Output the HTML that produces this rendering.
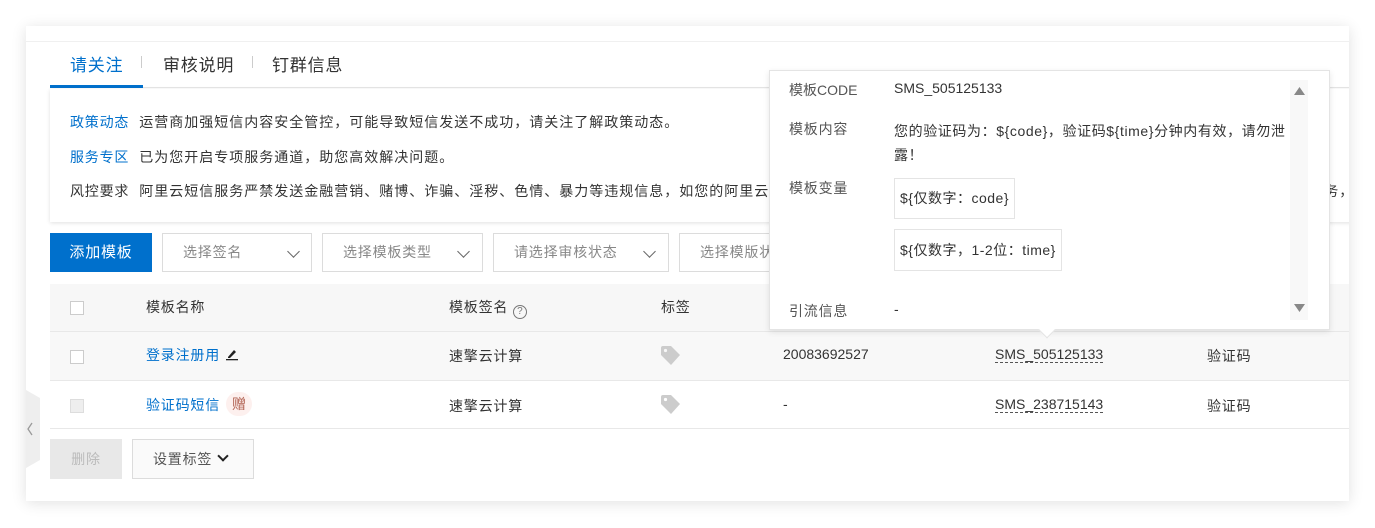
<!DOCTYPE html>
<html><head><meta charset="utf-8">
<style>
*{box-sizing:border-box;margin:0;padding:0}
body{width:1375px;height:528px;background:#fff;font-family:"Liberation Sans","Noto Sans CJK SC",sans-serif;font-size:14px;color:#333;position:relative;overflow:hidden}
.a{position:absolute;white-space:nowrap}
.card{position:absolute;left:26px;top:26px;width:1323px;height:475px;background:#fff;box-shadow:0 2px 14px rgba(0,0,0,.12);overflow:hidden}
.blue{color:#0070cc}
.ls{letter-spacing:0.8px}
.lab{margin-right:10px;letter-spacing:0.8px}
.sel{position:absolute;top:233px;height:39px;border:1px solid #dcdcdc;background:#fff;color:#888;padding-left:20px;line-height:37px;font-size:14px;letter-spacing:0.8px}
.chev{position:absolute;top:13px;width:9px;height:9px;border-right:1.6px solid #666;border-bottom:1.6px solid #666;transform:rotate(45deg)}
.cb{position:absolute;width:14px;height:14px;border:1px solid #ccc;background:#fff}
.dash{border-bottom:1.5px dashed #555}
.tag{position:absolute;width:19px;height:19px}
</style></head><body>
<div class="card">
  <div class="a" style="left:0;top:15px;width:1323px;height:1px;background:#f0f0f0"></div>
  <div class="a" style="left:24px;top:61px;width:1299px;height:1px;background:#e6e6e6"></div>
  <div class="a" style="left:24px;top:59px;width:93px;height:3px;background:#0070cc"></div>
  <div class="a blue ls" style="left:44px;top:25px;font-size:17px">请关注</div>
  <div class="a" style="left:115px;top:30px;width:1px;height:12px;background:#ccc"></div>
  <div class="a ls" style="left:137px;top:25px;font-size:17px">审核说明</div>
  <div class="a" style="left:226px;top:30px;width:1px;height:12px;background:#ccc"></div>
  <div class="a ls" style="left:246px;top:25px;font-size:17px">钉群信息</div>
  <div class="a" style="left:24px;top:63px;width:1320px;height:133px;background:#fff;box-shadow:0 1px 4px rgba(0,0,0,.12)"></div>
  <div class="a" style="left:44px;top:86px;letter-spacing:1px"><span class="blue lab">政策动态</span>运营商加强短信内容安全管控，可能导致短信发送不成功，请关注了解政策动态。</div>
  <div class="a" style="left:44px;top:121px;letter-spacing:1px"><span class="blue lab">服务专区</span>已为您开启专项服务通道，助您高效解决问题。</div>
  <div class="a" style="left:44px;top:155px;letter-spacing:1px"><span class="lab">风控要求</span>阿里云短信服务严禁发送金融营销、赌博、诈骗、淫秽、色情、暴力等违规信息，如您的阿里云账号存在违规行为，将对您的账号进行停用处理，请您遵守相关法律法规使用短信服务，谢谢您的配合！短信签名和模板将严格审核账号</div>
  <div class="a ls" style="left:24px;top:207px;width:102px;height:39px;background:#0070cc;color:#fff;line-height:39px;text-align:center;font-size:15px">添加模板</div>
</div>
<div class="sel" style="left:162px;width:150px">选择签名<span class="chev" style="left:126px"></span></div>
<div class="sel" style="left:322px;width:161px">选择模板类型<span class="chev" style="left:136px"></span></div>
<div class="sel" style="left:493px;width:176px">请选择审核状态<span class="chev" style="left:151px"></span></div>
<div class="sel" style="left:679px;width:100px">选择模版状</div>
<div class="a" style="left:50px;top:284px;width:1299px;height:48px;background:#f7f7f7;border-bottom:1px solid #e8e8e8"></div>
<div class="a" style="left:50px;top:332px;width:1299px;height:49px;background:#f8f8f8;border-bottom:1px solid #e8e8e8"></div>
<div class="a" style="left:50px;top:381px;width:1299px;height:48px;background:#fff;border-bottom:1px solid #e8e8e8"></div>
<div class="cb" style="left:70px;top:301px"></div>
<div class="a ls" style="left:146px;top:297px">模板名称</div>
<div class="a ls" style="left:449px;top:297px">模板签名 <span style="display:inline-block;width:14px;height:14px;border:1.3px solid #777;border-radius:50%;font-size:10px;line-height:12px;text-align:center;color:#777;vertical-align:-2px;letter-spacing:0">?</span></div>
<div class="a ls" style="left:661px;top:297px">标签</div>
<div class="cb" style="left:70px;top:350px"></div>
<div class="a blue ls" style="left:146px;top:345px">登录注册用 <svg width="14" height="14" viewBox="0 0 14 14" style="vertical-align:-1px"><path d="M3 10 L9 3 L11 5 L5 11 L3 11Z" fill="#222"/><rect x="1" y="12" width="12" height="1.3" fill="#222"/></svg></div>
<div class="a ls" style="left:449px;top:346px">速擎云计算</div>
<svg class="tag" style="left:661px;top:346px" viewBox="0 0 19 19"><path d="M2 0 H10 L19 9 L10 19 L0 9 V2 Q0 0 2 0Z" fill="#ccc"/><circle cx="4.5" cy="4.5" r="1.6" fill="#f8f8f8"/></svg>
<div class="a" style="left:783px;top:346px">20083692527</div>
<div class="a" style="left:995px;top:346px"><span class="dash">SMS_505125133</span></div>
<div class="a ls" style="left:1207px;top:346px">验证码</div>
<div class="cb" style="left:70px;top:399px;background:#eee;border-color:#ddd"></div>
<div class="a blue ls" style="left:146px;top:395px">验证码短信</div>
<div class="a" style="left:226px;top:392px;width:26px;height:24px;border-radius:12px;background:#fdf0ee;color:#b06050;text-align:center;line-height:24px">赠</div>
<div class="a ls" style="left:449px;top:396px">速擎云计算</div>
<svg class="tag" style="left:661px;top:395px" viewBox="0 0 19 19"><path d="M2 0 H10 L19 9 L10 19 L0 9 V2 Q0 0 2 0Z" fill="#ccc"/><circle cx="4.5" cy="4.5" r="1.6" fill="#fff"/></svg>
<div class="a" style="left:783px;top:396px">-</div>
<div class="a" style="left:995px;top:396px"><span class="dash">SMS_238715143</span></div>
<div class="a ls" style="left:1207px;top:396px">验证码</div>
<div class="a ls" style="left:50px;top:439px;width:72px;height:40px;background:#e8e8e8;color:#bbb;line-height:40px;text-align:center">删除</div>
<div class="a ls" style="left:132px;top:439px;width:122px;height:40px;border:1px solid #dcdcdc;background:#fafafa;color:#555;line-height:38px;padding-left:20px">设置标签 <span style="display:inline-block;width:8px;height:8px;border-right:2px solid #222;border-bottom:2px solid #222;transform:rotate(45deg);vertical-align:4px;margin-left:2px"></span></div>
<svg class="a" style="left:26px;top:390px" width="14" height="78" viewBox="0 0 14 78"><path d="M0 0 L14 8 V70 L0 78Z" fill="#eee"/><path d="M6 33 L2 39 L6 45" stroke="#999" stroke-width="1.3" fill="none"/></svg>
<div class="a" style="left:769px;top:70px;width:561px;height:260px;background:#fff;border:1px solid #e4e4e4;box-shadow:0 2px 6px rgba(0,0,0,.1)"></div>
<div class="a" style="left:1041px;top:324px;width:12px;height:12px;background:#fff;transform:rotate(45deg);border-right:1px solid #e4e4e4;border-bottom:1px solid #e4e4e4"></div>
<div class="a" style="left:1290px;top:80px;width:18px;height:240px;background:#f8f8f8"></div>
<svg class="a" style="left:1294px;top:87px" width="11" height="8"><path d="M0 8 L5.5 0 L11 8Z" fill="#888"/></svg>
<svg class="a" style="left:1294px;top:304px" width="11" height="8"><path d="M0 0 L5.5 8 L11 0Z" fill="#888"/></svg>
<div class="a" style="left:789px;top:80px;color:#555">模板CODE</div>
<div class="a" style="left:894px;top:80px">SMS_505125133</div>
<div class="a ls" style="left:789px;top:119px;color:#555">模板内容</div>
<div class="a" style="left:894px;top:119px;line-height:24px;white-space:normal;width:405px;letter-spacing:0.6px">您的验证码为：${code}，验证码${time}分钟内有效，请勿泄露！</div>
<div class="a ls" style="left:789px;top:178px;color:#555">模板变量</div>
<div class="a" style="left:894px;top:178px;height:41px;padding:0 5px;border:1px solid #e4e4e4;line-height:39px;letter-spacing:0.5px">${仅数字：code}</div>
<div class="a" style="left:894px;top:229px;height:42px;padding:0 5px;border:1px solid #e4e4e4;line-height:40px;letter-spacing:0.5px">${仅数字，1-2位：time}</div>
<div class="a ls" style="left:789px;top:301px;color:#555">引流信息</div>
<div class="a" style="left:894px;top:301px">-</div>
</body></html>
